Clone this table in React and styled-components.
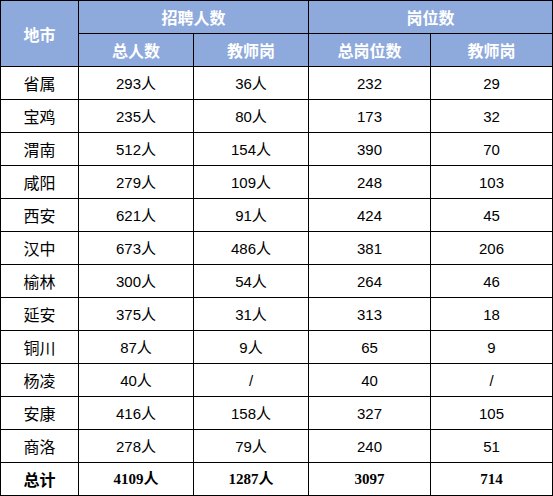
import React from 'react';
import styled, { createGlobalStyle } from 'styled-components';

const GlobalStyle = createGlobalStyle`
  html, body {
    margin: 0;
    padding: 0;
    background: #ffffff;
  }
`;

const Table = styled.table`
  border-collapse: collapse;
  table-layout: fixed;
  width: 552px;
  font-family: "Noto Sans CJK SC", "Liberation Sans", sans-serif;
  color: #000;
`;

const Col = styled.col`
  width: ${(p) => p.$w}px;
`;

const HeadCell = styled.th`
  background: #8ea9db;
  color: #ffffff;
  font-size: 16px;
  font-weight: 700;
  height: 32px;
  padding: 0;
  text-align: center;
  vertical-align: middle;
  border: 1px solid #000;
  line-height: 1;
`;

const Cell = styled.td`
  height: 32px;
  padding: 0;
  text-align: center;
  vertical-align: middle;
  border: 1px solid #000;
  font-size: 15px;
  line-height: 1;
  font-family: ${(p) =>
    p.$total
      ? '"Liberation Serif", "Noto Sans CJK SC", serif'
      : '"Liberation Sans", "Noto Sans CJK SC", sans-serif'};
  font-weight: ${(p) => (p.$total ? 700 : 400)};
`;

const CityCell = styled(Cell)`
  font-family: "Noto Sans CJK SC", sans-serif;
  font-size: 16px;
`;

const rows = [
  ['省属', '293人', '36人', '232', '29'],
  ['宝鸡', '235人', '80人', '173', '32'],
  ['渭南', '512人', '154人', '390', '70'],
  ['咸阳', '279人', '109人', '248', '103'],
  ['西安', '621人', '91人', '424', '45'],
  ['汉中', '673人', '486人', '381', '206'],
  ['榆林', '300人', '54人', '264', '46'],
  ['延安', '375人', '31人', '313', '18'],
  ['铜川', '87人', '9人', '65', '9'],
  ['杨凌', '40人', '/', '40', '/'],
  ['安康', '416人', '158人', '327', '105'],
  ['商洛', '278人', '79人', '240', '51'],
];

const total = ['总计', '4109人', '1287人', '3097', '714'];

export default function App() {
  return (
    <>
      <GlobalStyle />
      <Table>
        <colgroup>
          <Col $w={78} />
          <Col $w={115} />
          <Col $w={115} />
          <Col $w={122} />
          <Col $w={122} />
        </colgroup>
        <thead>
          <tr>
            <HeadCell rowSpan={2}>地市</HeadCell>
            <HeadCell colSpan={2}>招聘人数</HeadCell>
            <HeadCell colSpan={2}>岗位数</HeadCell>
          </tr>
          <tr>
            <HeadCell>总人数</HeadCell>
            <HeadCell>教师岗</HeadCell>
            <HeadCell>总岗位数</HeadCell>
            <HeadCell>教师岗</HeadCell>
          </tr>
        </thead>
        <tbody>
          {rows.map((r) => (
            <tr key={r[0]}>
              <CityCell>{r[0]}</CityCell>
              {r.slice(1).map((v, i) => (
                <Cell key={i}>{v}</Cell>
              ))}
            </tr>
          ))}
          <tr>
            <CityCell $total>{total[0]}</CityCell>
            {total.slice(1).map((v, i) => (
              <Cell key={i} $total>{v}</Cell>
            ))}
          </tr>
        </tbody>
      </Table>
    </>
  );
}
